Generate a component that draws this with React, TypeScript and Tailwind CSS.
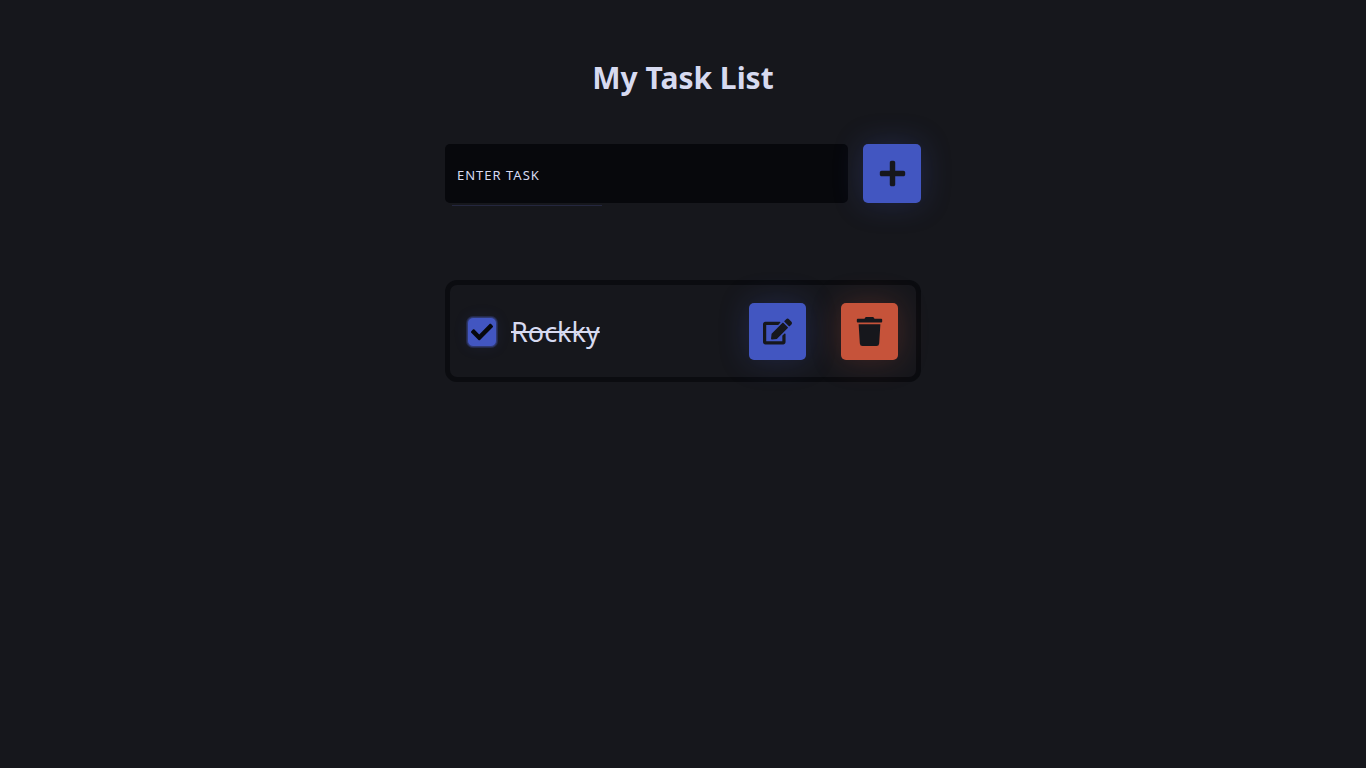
import { useState } from "react";
import type { FormEvent } from "react";
import { FaCheck, FaEdit, FaPlus, FaTrash } from "react-icons/fa";

type Task = { id: number; name: string; done: boolean };

export default function App() {
  const [tasks, setTasks] = useState<Task[]>([{ id: 1, name: "Rockky", done: true }]);
  const [draft, setDraft] = useState("");

  const save = (event: FormEvent) => {
    event.preventDefault();
    if (!draft.trim()) return;
    setTasks([...tasks, { id: Date.now(), name: draft.trim(), done: false }]);
    setDraft("");
  };

  const toggle = (id: number) =>
    setTasks(tasks.map((task) => (task.id === id ? { ...task, done: !task.done } : task)));

  const edit = (task: Task) => {
    setDraft(task.name);
    setTasks(tasks.filter((other) => other.id !== task.id));
  };

  return (
    <div className="min-h-screen bg-[#16171c] px-4 pt-14 font-['Noto_Sans','Open_Sans',sans-serif] text-[#d7daf0]">
      <main className="mx-auto w-full max-w-[476px]">
        <h1 className="text-center text-[30px] leading-11 font-bold">My Task List</h1>

        <form onSubmit={save} className="mt-11 flex gap-[15px]">
          <div className="min-w-0 flex-1">
            <input
              type="text"
              aria-label="Enter task"
              placeholder="ENTER TASK"
              value={draft}
              onChange={(event) => setDraft(event.target.value)}
              className="block h-[59px] w-full rounded-[5px] bg-[#07080c] px-3 pt-0.5 text-[13px] tracking-[1px] outline-none placeholder:text-[#d7daf0]"
            />
            <div className="mt-[2px] ml-[7px] h-px w-[150px] bg-[#24273f]" />
          </div>
          <button
            type="submit"
            aria-label="Add task"
            className="flex h-[59px] w-[58px] items-center justify-center rounded-[5px] bg-[#4256c1] text-[29px] text-[#16171c] shadow-[0_0_30px_#4256c140]"
          >
            <FaPlus />
          </button>
        </form>

        <ul className="mt-[74px] flex flex-col gap-4">
          {tasks.map((task) => (
            <li
              key={task.id}
              className="flex items-center rounded-xl border-5 border-[#0b0c10] pt-[18px] pr-[18px] pb-[17px] pl-[17px]"
            >
              <label className="flex min-w-0 flex-1 items-center gap-[14px]">
                <span className="grid size-[30px] shrink-0 place-items-center">
                  <input
                    type="checkbox"
                    checked={task.done}
                    onChange={() => toggle(task.id)}
                    className="col-start-1 row-start-1 size-[30px] appearance-none rounded-[6px] border border-[#2f396f] shadow-[0_0_0_1px_#242a4b,0_0_15px_#4256c11a] checked:bg-[#4256c1]"
                  />
                  {task.done && (
                    <FaCheck className="pointer-events-none col-start-1 row-start-1 text-[22px] text-[#07080c]" />
                  )}
                </span>
                <span className={task.done ? "truncate text-[27px] leading-10 line-through" : "truncate text-[27px] leading-10"}>
                  {task.name}
                </span>
              </label>
              <div className="flex gap-[35px]">
                <button
                  type="button"
                  aria-label="Edit task"
                  onClick={() => edit(task)}
                  className="flex size-[57px] items-center justify-center rounded-[5px] bg-[#4256c1] text-[29px] text-[#16171c] shadow-[0_0_30px_#4256c140]"
                >
                  <FaEdit />
                </button>
                <button
                  type="button"
                  aria-label="Delete task"
                  onClick={() => setTasks(tasks.filter((other) => other.id !== task.id))}
                  className="flex size-[57px] items-center justify-center rounded-[5px] bg-[#c6533a] text-[29px] text-[#16171c] shadow-[0_0_30px_#c6533a40]"
                >
                  <FaTrash />
                </button>
              </div>
            </li>
          ))}
        </ul>
      </main>
    </div>
  );
}
